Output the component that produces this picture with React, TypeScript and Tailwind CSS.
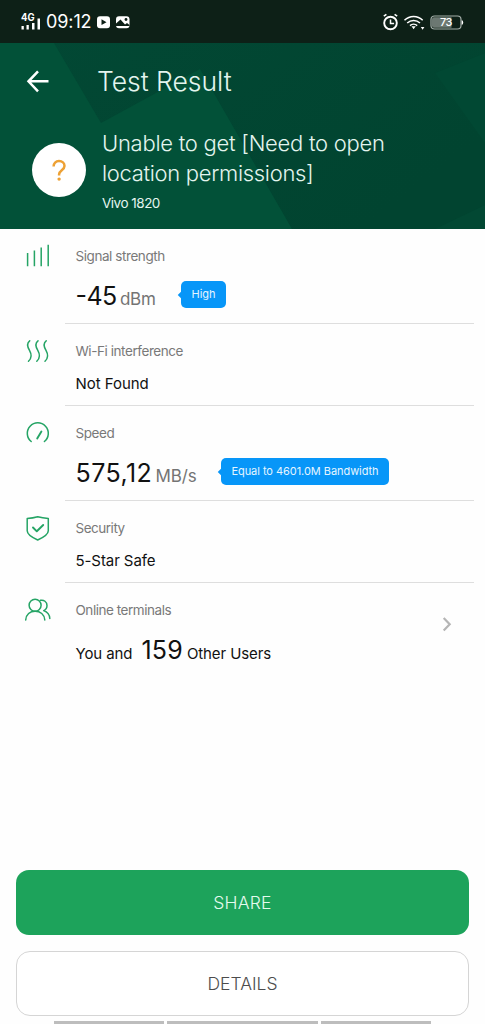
import type { ReactNode } from 'react';

const stroke = {
  fill: 'none',
  stroke: '#25a465',
  strokeWidth: 1.5,
  strokeLinecap: 'round' as const,
  strokeLinejoin: 'round' as const,
};

function SignalIcon() {
  return (
    <svg width="28" height="28" viewBox="0 0 28 28" {...stroke} strokeLinecap="butt">
      <path d="M3.600 11v13.200M10.400 8.600v15.600M17.200 5.500v18.700M24.200 2.800v21.400" />
    </svg>
  );
}

function WavesIcon() {
  return (
    <svg width="28" height="28" viewBox="0 0 28 28" {...stroke}>
      <path d="M5.700 3.800c-3.400 2.600-2.200 6.200-.2 9.600 2 3.500 2.700 7.500-1 10.800" />
      <path d="M14 3.800c-3.400 2.600-2.200 6.200-.2 9.600 2 3.500 2.700 7.500-1 10.800" />
      <path d="M22.200 3.800c-3.400 2.600-2.200 6.200-.2 9.600 2 3.500 2.700 7.500-1 10.800" />
    </svg>
  );
}

function SpeedIcon() {
  return (
    <svg width="28" height="28" viewBox="0 0 28 28" {...stroke}>
      <path d="M7.200 22.500A10.500 10.500 0 1 1 20.400 22.500" />
      <path d="M13.200 19.500l4.200-7" strokeWidth="1.900" />
    </svg>
  );
}

function ShieldIcon() {
  return (
    <svg width="28" height="28" viewBox="0 0 28 28" {...stroke}>
      <path d="M13.700 2.700c3.600 1 7 1.500 10.600 1.800v12.300c0 3.500-4.300 6.400-10.600 9.200-6.300-2.800-10.500-5.700-10.500-9.200V4.500c3.600-.3 6.900-.8 10.500-1.800z" />
      <path d="M9 13.500l3.800 3.800 6.400-6.300" strokeWidth="1.900" />
    </svg>
  );
}

function UsersIcon() {
  return (
    <svg width="28" height="28" viewBox="0 0 28 28" {...stroke}>
      <circle cx="11.100" cy="9.200" r="6" />
      <path d="M1.700 24c.3-5.600 4.300-8.800 9.400-8.800s9.400 3.200 9.700 8.800" />
      <path d="M16.500 4.300c3.300-.7 6.500 1.500 6.500 5.200 0 2.400-1.200 4.200-3.300 5.100 3.500 1.200 5.900 3.900 6.100 7.900" />
    </svg>
  );
}

function Bubble({ className, children }: { className: string; children: ReactNode }) {
  return (
    <div
      className={`relative flex h-[27px] items-center justify-center whitespace-nowrap rounded-[5px] bg-[#0796f8] text-[11px] text-[#e5f5ff] ${className}`}
    >
      <span className="absolute left-[-2px] top-[10.500px] size-[6px] rotate-45 bg-[#0796f8]" />
      <span className="relative">{children}</span>
    </div>
  );
}

function Row({
  icon,
  label,
  labelClass,
  height,
  last,
  children,
}: {
  icon: ReactNode;
  label: string;
  labelClass: string;
  height: string;
  last?: boolean;
  children: ReactNode;
}) {
  return (
    <section className={`flex ${height}`}>
      <div className="w-[65px] shrink-0 pl-6 pt-[13px]">{icon}</div>
      <div className={`mr-[11px] flex grow flex-col pl-[10.500px] pt-[17px] ${last ? '' : 'border-b border-[#dedede]'}`}>
        <h2 className={`h-5 whitespace-nowrap text-[13.500px] leading-5 text-[#797979] ${labelClass}`}>{label}</h2>
        {children}
      </div>
    </section>
  );
}

function StatusBar() {
  return (
    <div className="flex h-[43px] items-center bg-[#0d2017] text-white">
      <svg className="ml-5 shrink-0" width="22" height="20" viewBox="0 0 22 20" fill="#fff">
        <text x="1" y="9" fontSize="10" fontWeight="700" fontFamily="Inter, sans-serif" textLength="13.500" lengthAdjust="spacingAndGlyphs">4G</text>
        <path d="M1.500 14h2.300v3.500H1.500zM6.500 13h2.300v4.500H6.500zM12 11h2.500v6.500H12zM17.500 6.500H20v11h-2.500z" />
      </svg>
      <span className="ml-[4px] w-[46px] whitespace-nowrap text-[18px] tracking-[-0.100px]">09:12</span>
      <svg className="ml-1 shrink-0" width="36" height="14" viewBox="0 0 36 14">
        <rect x="1" y="1.200" width="13" height="12" rx="3" fill="#fff" />
        <path d="M5.500 4.300l5 2.900-5 2.900z" fill="#0d2017" />
        <rect x="20" y="1.200" width="13.500" height="12" rx="3" fill="#fff" />
        <path d="M20 8.500l4.500-4 4.500 5 2-1.500 2.500 2v.9H20z" fill="#0d2017" />
        <circle cx="30" cy="4.500" r="1.400" fill="#0d2017" />
      </svg>
      <svg className="ml-auto shrink-0" width="84" height="20" viewBox="0 0 84 20" fill="none" stroke="#fff">
        <circle cx="7.500" cy="11" r="6.300" strokeWidth="1.900" />
        <path d="M7.500 7.500v3.900h3.600" strokeWidth="1.500" />
        <path d="M.8 4.200l2.600-1.800M14.200 4.200l-2.600-1.800" strokeWidth="1.600" />
        <path d="M21.500 8.300c5.200-5 13-5 18.200 0M24.200 11c3.700-3.500 9.100-3.500 12.800 0M27 13.600c2-1.900 5.200-1.900 7.200 0" strokeWidth="1.500" />
        <path d="M28.500 14.200h4.200l-2.100 3zM37.800 15h3.600l-1.800 2.800z" fill="#fff" stroke="none" />
        <rect x="48" y="4" width="30" height="13" rx="3.500" stroke="#a5afaa" strokeWidth="1.200" />
        <path d="M51 5.200h17.500v10.600H51q-2 0-2-2V7.200q0-2 2-2z" fill="#6c7872" stroke="none" />
        <path d="M78.700 8.300q1.500 0 1.500 2.300t-1.500 2.200z" fill="#fff" stroke="none" />
        <text x="57" y="14.300" fontSize="11" fontWeight="500" fontFamily="Inter, sans-serif" fill="#fff" stroke="none" textLength="12.500">73</text>
      </svg>
      <div className="w-[18px] shrink-0" />
    </div>
  );
}

function Header() {
  return (
    <header className="relative h-[186px] overflow-hidden bg-[#014732] text-[#e4f5ef]">
      <svg className="absolute inset-0" width="485" height="186" viewBox="0 0 485 186">
        <defs>
          <linearGradient id="right" x1="0" y1="0" x2="1" y2="0.500">
            <stop offset="0" stopColor="#024834" />
            <stop offset="1" stopColor="#014430" />
          </linearGradient>
        </defs>
        <rect width="485" height="186" fill="url(#right)" />
        <path d="M0 0H54L101 80 200 26 292 186H0z" fill="#025138" />
        <path d="M485 10L435 30 485 100z" fill="#014833" />
        <path d="M485 162L435 186H485z" fill="#024833" />
      </svg>
      <div className="relative flex h-[78px] items-center">
        <svg className="ml-[26px] shrink-0" width="24" height="24" viewBox="0 0 24 24" fill="none" stroke="#fff" strokeWidth="2.500">
          <path d="M22.500 11.300H3M12 1.300l-9.500 10 9.500 10" />
        </svg>
        <h1 className="ml-[47px] whitespace-nowrap text-[26.500px] font-light tracking-[-0.020px]">Test Result</h1>
      </div>
      <div className="relative flex">
        <div className="ml-8 mt-[21.500px] flex size-[54px] shrink-0 items-center justify-center rounded-full bg-white">
          <svg width="16" height="24" viewBox="0 0 16 24" fill="none" stroke="#eda135" strokeWidth="2.500">
            <path d="M2.600 8.500c0-3.400 2.200-5.400 5.400-5.400 3.200 0 5.500 1.900 5.500 4.800 0 4.200-5.400 4.300-5.400 8.400v1.200" />
            <circle cx="8.100" cy="21.100" r="1.700" fill="#eda135" stroke="none" />
          </svg>
        </div>
        <div className="ml-4 mt-[7px] whitespace-nowrap">
          <p className="text-[22px] font-light leading-[30px] tracking-[-0.260px]">Unable to get [Need to open</p>
          <p className="text-[22px] font-light leading-[30px] tracking-[-0.310px]">location permissions]</p>
          <p className="mt-[5px] text-[13.500px] leading-5 tracking-[-0.500px]">Vivo 1820</p>
        </div>
      </div>
    </header>
  );
}

export default function App() {
  return (
    <main className="flex h-[1024px] w-[485px] flex-col overflow-hidden bg-[#fefefe] font-[Inter,sans-serif]">
      <StatusBar />
      <Header />
      <Row icon={<SignalIcon />} label="Signal strength" labelClass="tracking-[-0.430px]" height="h-[95px]">
        <div className="flex items-center pt-3">
          <div className="flex w-[105.500px] items-baseline whitespace-nowrap leading-9">
            <span className="inline-block w-[44.500px] text-[25px] tracking-[-0.600px] text-[#111]">
              <span className="relative -top-px">-</span>45
            </span>
            <span className="text-[17px] tracking-[-0.300px] text-[#747474]">dBm</span>
          </div>
          <Bubble className="-mt-1.5 w-[45px]">High</Bubble>
        </div>
      </Row>
      <Row icon={<WavesIcon />} label="Wi-Fi interference" labelClass="tracking-[-0.430px]" height="h-[82px]">
        <p className="mt-[13px] text-[15px] leading-5 tracking-[-0.050px] text-[#111]">Not Found</p>
      </Row>
      <Row icon={<SpeedIcon />} label="Speed" labelClass="tracking-[-0.430px]" height="h-[95px]">
        <div className="flex items-center pt-3">
          <div className="flex w-[145.500px] items-baseline whitespace-nowrap leading-9">
            <span className="inline-block w-[80px] text-[25px] tracking-[0.450px] text-[#111]">575,12</span>
            <span className="text-[17px] tracking-[-0.100px] text-[#747474]">MB/s</span>
          </div>
          <Bubble className="-mt-1.5 w-[168px] tracking-[-0.050px]">Equal to 4601.0M Bandwidth</Bubble>
        </div>
      </Row>
      <Row icon={<ShieldIcon />} label="Security" labelClass="tracking-[-0.480px]" height="h-[82px]">
        <p className="mt-[13px] text-[15px] leading-5 tracking-[-0.080px] text-[#111]">5-Star Safe</p>
      </Row>
      <div className="flex">
        <div className="grow">
          <Row icon={<UsersIcon />} label="Online terminals" labelClass="tracking-[-0.460px]" height="h-[95px]" last>
            <p className="flex items-baseline whitespace-nowrap pt-3 text-[15px] leading-9 tracking-[-0.100px] text-[#111]">
              You and
              <span className="ml-[9px] inline-block w-[45.500px] text-[25px] tracking-[0.200px]">159</span>
              Other Users
            </p>
          </Row>
        </div>
        <svg className="mr-[31.500px] mt-[33px] shrink-0" width="14" height="16" viewBox="0 0 14 16" fill="none" stroke="#b5b5b5" strokeWidth="2.200">
          <path d="M3.700 2l6 6.300-6 6.300" />
        </svg>
      </div>
      <div className="mt-auto px-4">
        <button className="flex h-[65px] w-full items-center justify-center rounded-[13px] bg-[#1da35b] pt-0.5 text-[17.500px] font-light tracking-[0.200px] text-[#e5faee]">SHARE</button>
        <button className="mt-4 flex h-[65px] w-full items-center justify-center rounded-[14px] border border-[#d5d5d5] bg-white pt-0.5 text-[17.500px] font-light text-[#4c4c4c]">DETAILS</button>
      </div>
      <div className="ml-[54px] mt-[5px] flex h-[3px] w-[377px] gap-[3px]">
        <div className="w-[110px] bg-[#bdbdbd]" />
        <div className="grow bg-[#bdbdbd]" />
        <div className="w-[110px] bg-[#bdbdbd]" />
      </div>
    </main>
  );
}
